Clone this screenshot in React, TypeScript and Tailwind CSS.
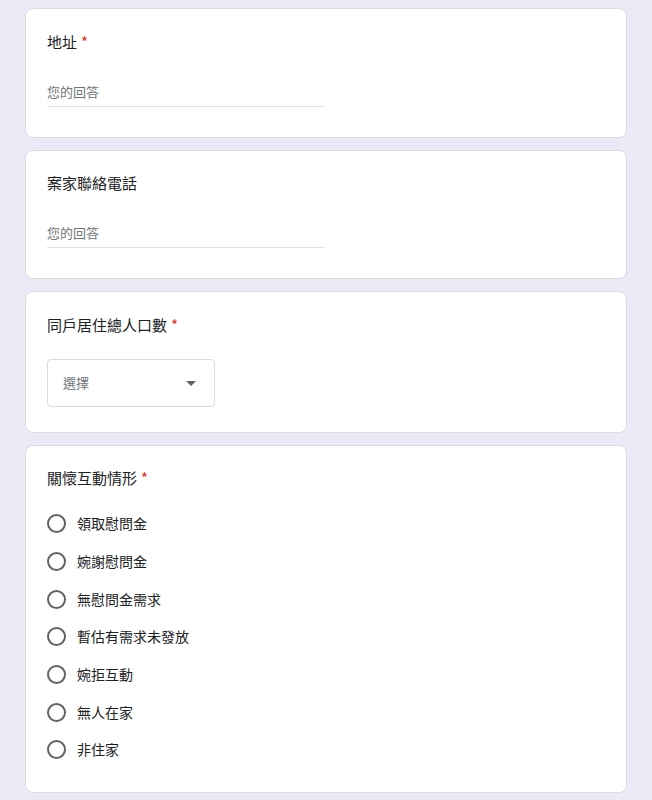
import React from "react";

const font = {
  fontFamily: '"Noto Sans CJK TC", "Noto Sans", Roboto, sans-serif',
};

const Title = ({ text, required }: { text: string; required?: boolean }) => (
  <div className="h-5 flex items-center text-[15px] text-[#202124]">
    <span>{text}</span>
    {required && <span className="ml-1 text-[#d93025]">*</span>}
  </div>
);

const Card = ({ children, className }: { children: React.ReactNode; className?: string }) => (
  <div className={`bg-white rounded-lg border border-[#dadce0] pl-[21px] pr-6 ${className ?? ""}`}>
    {children}
  </div>
);

const TextAnswer = () => (
  <div className="w-[278px] border-b border-[#e0e0e0] pb-1 mt-[30px]">
    <div className="h-5 flex items-center text-[13px] text-[#70757a]">您的回答</div>
  </div>
);

const options = [
  "領取慰問金",
  "婉謝慰問金",
  "無慰問金需求",
  "暫估有需求未發放",
  "婉拒互動",
  "無人在家",
  "非住家",
];

export default function App() {
  return (
    <div className="min-h-[800px] bg-[#ede9f6] px-[25px] pt-2 pb-2 flex flex-col gap-[12px]" style={font}>
      <Card className="pt-[23px] pb-[30px]">
        <Title text="地址" required />
        <TextAnswer />
      </Card>

      <Card className="pt-[22px] pb-[30px]">
        <Title text="案家聯絡電話" />
        <TextAnswer />
      </Card>

      <Card className="pt-[23px] pb-[25px]">
        <Title text="同戶居住總人口數" required />
        <div className="mt-[24px] w-[168px] h-[48px] rounded border border-[#dadce0] flex items-center justify-between pl-[15px] pr-[18px]">
          <span className="text-[13px] text-[#70757a]">選擇</span>
          <svg width="10" height="5" viewBox="0 0 10 5">
            <path d="M0 0 L10 0 L5 5 Z" fill="#5f6368" />
          </svg>
        </div>
      </Card>

      <Card className="pt-[22px] pb-[23px]">
        <Title text="關懷互動情形" required />
        <div className="mt-[17px] flex flex-col">
          {options.map((o) => (
            <div key={o} className="h-[37.7px] flex items-center">
              <div className="w-[19px] h-[19px] rounded-full border-2 border-[#5f6368] shrink-0" />
              <span className="ml-[11px] text-[14px] text-[#202124]">{o}</span>
            </div>
          ))}
        </div>
      </Card>
    </div>
  );
}
